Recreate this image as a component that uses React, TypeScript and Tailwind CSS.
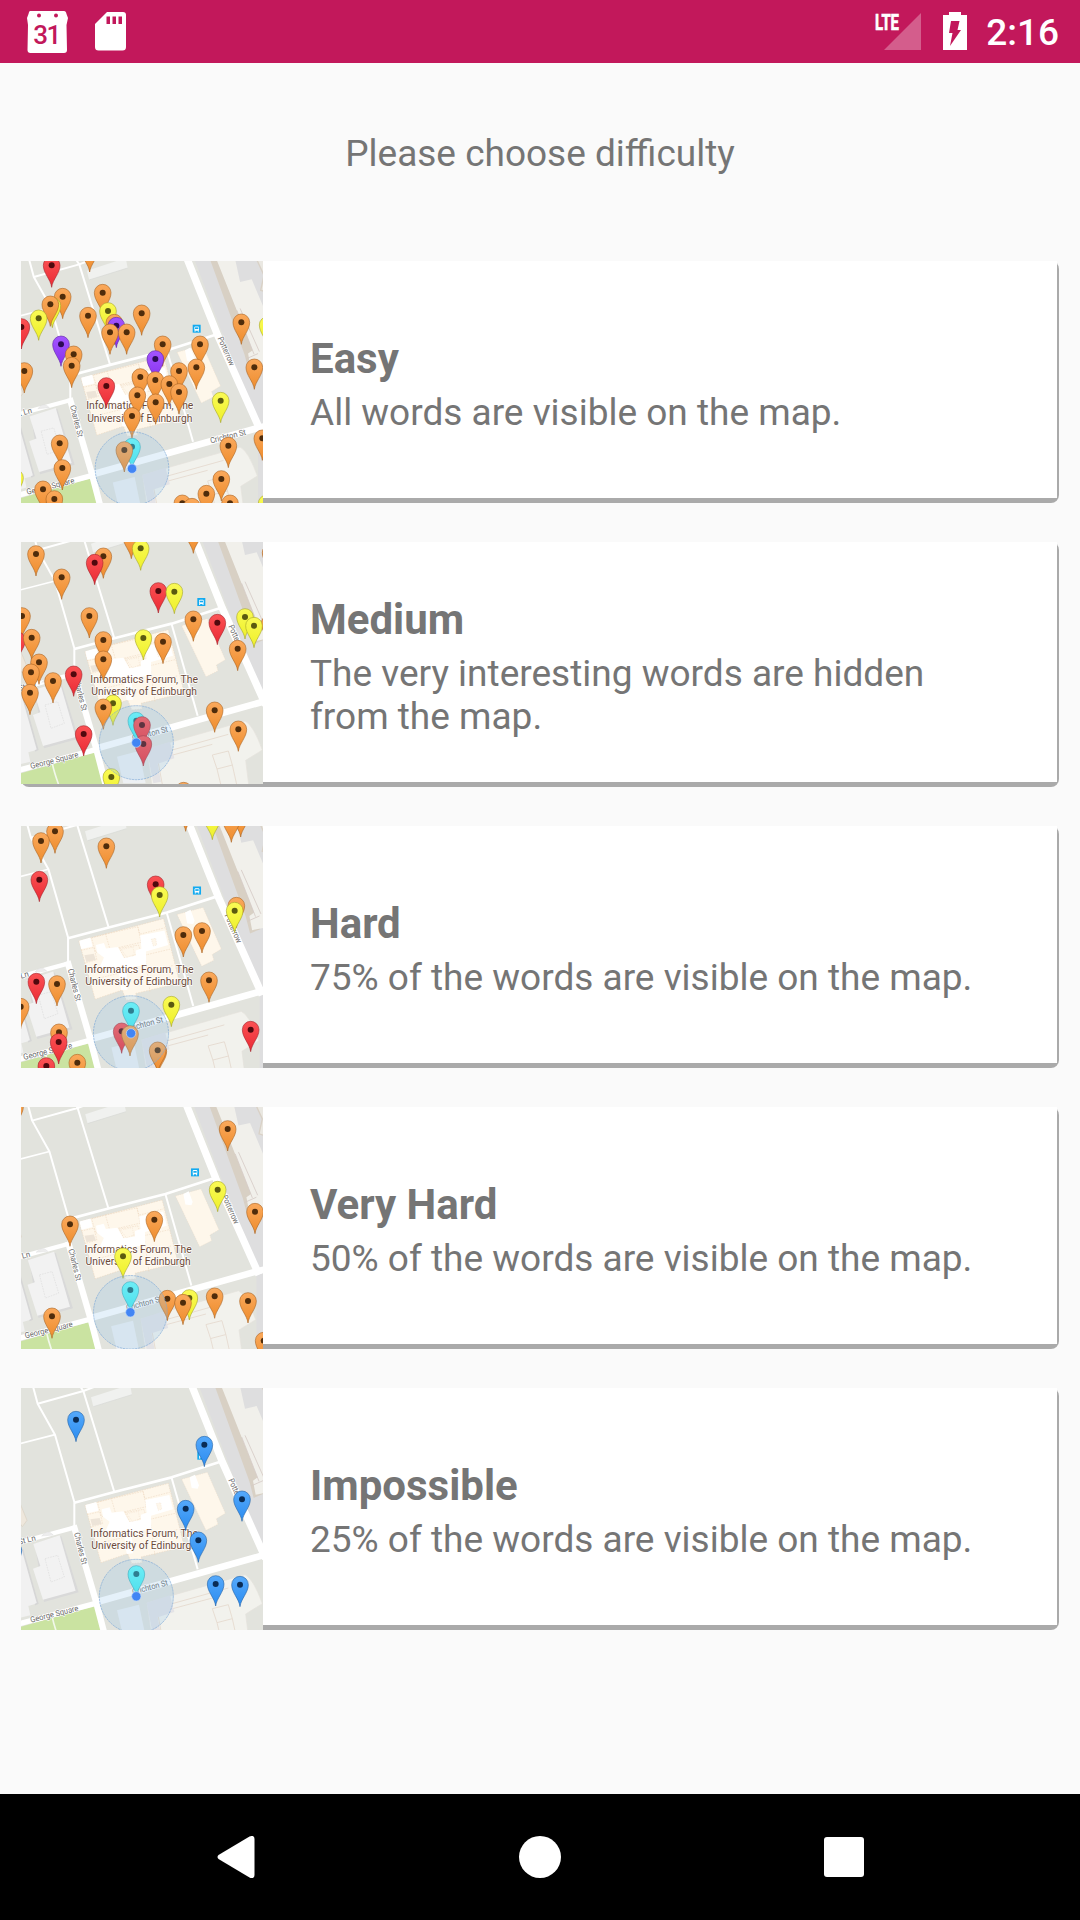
import React from "react";

type Kind = "o" | "r" | "y" | "p" | "c" | "b";
type Marker = [Kind, number, number];

interface MapData {
  top: number;
  cx: number;
  cy: number;
  scale: number;
  potterrow?: string;
  crichton?: string;
  markers: Marker[];
}

const PIN: Record<Kind, { from: string; to: string; edge: string; dot: string }> = {
  o: { from: "#faa95c", to: "#ee8c2c", edge: "#a96322", dot: "#4f2c0b" },
  r: { from: "#fb5254", to: "#ea2a34", edge: "#a3222a", dot: "#50090e" },
  y: { from: "#fafa55", to: "#eef02a", edge: "#a5a52a", dot: "#5b5a10" },
  p: { from: "#a355ff", to: "#8730ee", edge: "#5c24a3", dot: "#2b0b55" },
  c: { from: "#62fafb", to: "#3ae8ec", edge: "#2ba4b0", dot: "#126a75" },
  b: { from: "#55a9fb", to: "#2b8cf0", edge: "#2362a5", dot: "#0a2c55" },
};

const EASY: MapData = {
  top: 18, cx: 351, cy: 641, scale: 0.995,
  potterrow: "translate(622 250) rotate(66)",
  crichton: "translate(602 567) rotate(-14)",
  markers: [
    ["o", 224, -15], ["r", 110, 31], ["o", 143, 125], ["y", 112, 152], ["o", 106, 148], ["y", 71, 190],
    ["o", 263, 113], ["y", 279, 168], ["o", 219, 182], ["o", 380, 175], ["o", 298, 203], ["p", 304, 212],
    ["o", 285, 232], ["o", 335, 232], ["r", 19, 216], ["p", 138, 268], ["o", 176, 298], ["o", 170, 332],
    ["o", 28, 348], ["o", 443, 268], ["o", 555, 268], ["p", 421, 312], ["o", 544, 337], ["o", 492, 348],
    ["o", 376, 366], ["o", 421, 375], ["o", 463, 387], ["r", 274, 393], ["o", 492, 411], ["o", 367, 421],
    ["o", 422, 442], ["o", 351, 483], ["o", 679, 202], ["y", 758, 210], ["o", 718, 337], ["y", 617, 437],
    ["o", 134, 565], ["o", 142, 639], ["y", 0, 668], ["o", 84, 703], ["o", 118, 732], ["c", 351, 575],
    ["o", 328, 585], ["o", 742, 550], ["o", 640, 572], ["o", 619, 672], ["o", 574, 716], ["o", 502, 745],
    ["o", 531, 755], ["o", 645, 745], ["y", 755, 745],
  ],
};

const MEDIUM: MapData = {
  top: 18, cx: 364, cy: 620, scale: 1,
  markers: [
    ["o", 63, 54], ["o", 265, 61], ["r", 239, 80], ["o", 349, 2], ["y", 377, 37], ["o", 535, -14],
    ["o", 140, 124], ["r", 430, 165], ["y", 478, 167], ["o", 21, 240], ["o", 223, 240], ["o", 535, 250],
    ["r", 607, 260], ["y", 690, 243], ["o", 764, 262], ["y", 717, 269], ["r", 6, 312], ["o", 50, 305],
    ["o", 265, 312], ["y", 385, 306], ["o", 444, 317], ["o", 668, 338], ["o", 265, 370], ["o", 72, 379],
    ["o", 48, 409], ["r", 176, 415], ["o", 114, 435], ["o", 45, 470], ["y", 294, 502], ["o", 265, 514],
    ["o", 599, 523], ["c", 364, 554], ["r", 381, 567], ["o", 670, 580], ["r", 206, 594], ["r", 385, 624],
    ["y", 289, 723], ["o", 506, 764], ["o", 767, 50],
  ],
};

const HARD: MapData = {
  top: 18, cx: 348, cy: 640, scale: 1.015,
  markers: [
    ["o", 120, 34], ["o", 78, 63], ["o", 274, 79], ["r", 73, 179], ["o", 512, -32], ["y", 592, -7],
    ["o", 677, -15], ["o", 649, 1], ["r", 422, 193], ["y", 434, 225], ["o", 664, 257], ["y", 659, 272],
    ["o", 561, 333], ["o", 505, 345], ["o", 582, 481], ["r", 64, 485], ["o", 126, 492], ["y", 469, 554],
    ["o", 17, 560], ["c", 348, 572], ["r", 707, 629], ["r", 320, 634], ["o", 345, 642], ["o", 132, 637],
    ["r", 131, 666], ["o", 430, 694], ["o", 428, 691], ["o", 187, 728], ["r", 94, 738],
  ],
};

const VERY_HARD: MapData = {
  top: 21, cx: 346, cy: 637, scale: 0.995,
  markers: [
    ["o", 0, 20], ["o", 638, 87], ["y", 608, 269], ["o", 720, 335], ["o", 418, 359], ["o", 165, 373],
    ["y", 324, 469], ["c", 346, 570], ["o", 599, 589], ["o", 457, 596], ["y", 523, 594], ["o", 699, 603],
    ["o", 504, 608], ["o", 111, 649], ["o", 746, 722],
  ],
};

const IMPOSSIBLE: MapData = {
  top: 18, cx: 364, cy: 643, scale: 1,
  markers: [
    ["b", 183, 113], ["b", 568, 188], ["b", 681, 352], ["b", 512, 380], ["b", 550, 475], ["c", 364, 576],
    ["b", 602, 606], ["b", 675, 608], ["b", -5, 505],
  ],
};

function Gradients() {
  return (
    <svg className="absolute size-0" aria-hidden="true">
      <defs>
        {(Object.keys(PIN) as Kind[]).map((k) => (
          <linearGradient key={k} id={`pin-${k}`} x1="0" y1="0" x2="0" y2="1">
            <stop offset="0" stopColor={PIN[k].from} />
            <stop offset="1" stopColor={PIN[k].to} />
          </linearGradient>
        ))}
      </defs>
    </svg>
  );
}

function Streets() {
  return (
    <g>
      <rect x="-40" y="-40" width="880" height="880" fill="#e2e3dd" />
      {/* east side of Potterrow */}
      <path d="M540 -20 L800 -20 V800 H744 V520 Z" fill="#dededf" />
      <path d="M584 -30 L610 -20 L746 335 L716 348 L703 298 Z" fill="#d8d0c4" />
      <path d="M606 -20 L668 -20 L690 80 L725 72 L800 250 V322 L722 338 L714 296 L728 286 Z" fill="#f1f0eb" />
      <path d="M725 -20 H800 V120 L752 105 L762 60 Z" fill="#eae8e2" stroke="#d9d1c6" strokeWidth="4" />
      <path d="M680 165 L732 298 M690 160 L748 290 M708 312 L744 296" fill="none" stroke="#d6cbc6" strokeWidth="2.5" />
      {/* south-east block */}
      <path d="M395 662 L690 578 Q715 590 742 665 L692 696 L705 800 H415 Z" fill="#f2f2ed" stroke="#e5e2dc" strokeWidth="2" />
      <path d="M425 678 L640 618 M425 678 L448 800 M436 690 L592 648 M592 680 L640 668 L652 710 L606 722 Z M606 722 L625 800 M652 710 L672 800" fill="none" stroke="#e4d8cd" strokeWidth="2.5" />
      <path d="M395 662 L465 640 L478 690 L428 706 L438 760 L415 765 Z" fill="#e4e3e6" />
      <path d="M306 685 L372 668 L392 765 H325 Z" fill="#edf0f3" />
      {/* west block */}
      <path d="M55 486 L134 460 L186 628 L82 657 Z" fill="#d9d9d9" transform="translate(5 3)" />
      <path d="M55 486 L134 460 L182 626 L84 653 L54 560 L76 552 Z" fill="#f2f2f2" />
      <path d="M90 530 L128 520 L148 585 L108 600 Z" fill="none" stroke="#dcdcdc" strokeWidth="2" strokeDasharray="5 3" />
      <path d="M-20 510 L22 500 L68 664 L40 672 L46 700 L-20 716 Z" fill="#f1f1f1" />
      <path d="M22 500 L68 664 L60 668" fill="none" stroke="#d6d6d6" strokeWidth="5" />
      <path d="M16 366 L36 415 L22 434 L12 420 Z" fill="#eee7dc" stroke="#d9d0c2" strokeWidth="2" />
      {/* garden */}
      <path d="M-30 748 L240 672 L270 800 H-30 Z" fill="#cae3a1" />
      <path d="M112 706 Q118 735 135 780" fill="none" stroke="#f2f8ea" strokeWidth="5" />
      {/* north building */}
      <path d="M228 46 L345 8 L351 38 L235 74 Z" fill="#f0f1ef" />
      <path d="M235 74 L351 38" stroke="#d6d8d4" strokeWidth="2" />
      {/* paths and roads */}
      <g fill="none" stroke="#ffffff" strokeLinejoin="round">
        <path d="M45 -20 L68 65 L120 158 L178 360 L178 435" strokeWidth="6" />
        <path d="M68 65 L205 27 L290 -5" strokeWidth="6" />
        <path d="M192 8 L205 27 L298 330" strokeWidth="6" />
        <path d="M-20 194 L120 158" strokeWidth="5" />
        <path d="M178 362 L298 330 L470 286 L616 239" strokeWidth="8" />
        <path d="M470 288 L548 562" strokeWidth="6" />
        <path d="M-20 490 L180 436" strokeWidth="13" />
        <path d="M176 430 L242 655 L280 800" strokeWidth="19" />
        <path d="M-20 734 L242 664" strokeWidth="16" />
        <path d="M238 662 L744 520 L800 506" strokeWidth="20" />
        <path d="M518 -20 L622 240 L752 530" strokeWidth="22" />
      </g>
      <path d="M80 462 Q98 440 115 459 Z" fill="#ededed" stroke="#d8d8d8" />
      {/* forum */}
      <g stroke="#ecd6bd" strokeWidth="1.6" strokeDasharray="5 3">
        <path d="M210 370 L460 304 L508 494 L378 525 L382 542 L350 545 L338 515 L258 542 Z" fill="#fef7eb" />
        <path d="M247 361 L289 350 L302 395 L260 404 Z M289 350 L384 328 L394 374 L300 396 M384 328 L390 350 L464 331 M216 398 L254 389 L263 425 L226 436 M405 412 L480 394 M420 460 L490 442 M405 412 L420 520 M248 485 L330 465 M330 392 L386 382 L395 405 L370 412 L365 420 L345 420 Z M284 500 L350 485" fill="none" />
      </g>
      <g fill="#ffffff">
        <path d="M211 369 L244 360 L250 386 L217 394 Z" />
        <path d="M260 382 L284 376 L290 392 L325 388 L343 420 L378 414 L378 398 L395 392 L391 354 L463 339 L474 382 L408 401 L409 440 L350 450 L354 514 L335 516 L328 462 L270 450 L284 419 L264 404 Z" />
      </g>
      <g fill="#fef7eb" stroke="#ecd6bd" strokeDasharray="4 3">
        <path d="M424 365 L437 362 L440 382 L430 385 Z M335 395 L370 388 L374 410 L352 418 Z" />
        <path d="M500 292 L577 271 L631 394 L604 410 L609 427 L573 445 L562 422 Z" />
      </g>
      <path d="M524 286 L540 278 L552 310 L548 320 L530 318 Z" fill="#ffffff" />
      <path d="M226 412 L254 408 L260 426 L232 432 Z" fill="#ede4d8" />
      {/* bus stop */}
      <g transform="translate(559 221)">
        <rect x="-12" y="-12" width="24" height="24" fill="#12aaf0" />
        <rect x="-7" y="-7" width="14" height="13" rx="3" fill="#fff" />
        <rect x="-5" y="-4" width="10" height="5" fill="#12aaf0" />
        <path d="M-5 5 V9 M5 5 V9" stroke="#fff" strokeWidth="3" />
      </g>
    </g>
  );
}

function Labels({ map }: { map: MapData }) {
  return (
    <g fontFamily="Roboto, sans-serif" stroke="#ffffff" strokeLinejoin="round" paintOrder="stroke">
      <g fontSize="25" fill="#6b6b6b" strokeWidth="4">
        <text transform="translate(177 454) rotate(76)" textLength="98" lengthAdjust="spacingAndGlyphs">Charles St</text>
        <text transform={map.potterrow ?? "translate(640 294) rotate(66)"} textLength="92" lengthAdjust="spacingAndGlyphs">Potterrow</text>
        <text transform={map.crichton ?? "translate(354 638) rotate(-15)"} textLength="110" lengthAdjust="spacingAndGlyphs">Crichton St</text>
        <text transform="translate(48 722) rotate(-14)" textLength="148" lengthAdjust="spacingAndGlyphs">George Square</text>
        <text transform="translate(12 488) rotate(-14)" textLength="53" lengthAdjust="spacingAndGlyphs">St Ln</text>
      </g>
      <g fontSize="34" fill="#6b4a39" strokeWidth="4">
        <text x="226" y="464" textLength="323" lengthAdjust="spacingAndGlyphs">Informatics Forum, The</text>
        <text x="229" y="501" textLength="317" lengthAdjust="spacingAndGlyphs">University of Edinburgh</text>
      </g>
    </g>
  );
}

function MapThumb({ map }: { map: MapData }) {
  const r = 111 * map.scale;
  return (
    <svg className="block size-[242px] shrink-0" viewBox={`18 ${map.top} 726 726`}>
      <g transform={`translate(${map.cx} ${map.cy}) scale(${map.scale}) translate(-364 -643)`}>
        <Streets />
        <Labels map={map} />
      </g>
      {map.markers.map(([kind, x, y], i) => (
        <g key={i} transform={`translate(${x} ${y})`}>
          <path
            d="M0 66 C-3 42 -25 24 -25 0 A25 25 0 0 1 25 0 C25 24 3 42 0 66 Z"
            fill={`url(#pin-${kind})`}
            stroke={PIN[kind].edge}
            strokeWidth="1.8"
          />
          <circle r="9" fill={PIN[kind].dot} />
        </g>
      ))}
      <circle cx={map.cx} cy={map.cy} r={r} fill="#8fc4ea" fillOpacity="0.23" stroke="#7aa7d8" strokeWidth="2" strokeDasharray="7 2" />
      <circle cx={map.cx} cy={map.cy} r="14" fill="#4285f4" stroke="#c5dcfb" strokeWidth="2" />
    </svg>
  );
}

function Card({ title, text, map, tall }: { title: string; text: string; map: MapData; tall?: boolean }) {
  return (
    <section className={`flex rounded-[8px] rounded-tl-none bg-[#aaaaaa] ${tall ? "h-[245px] pb-[3px]" : "h-[242px] rounded-bl-none"}`}>
      <MapThumb map={map} />
      <div className={`mr-[2px] flex flex-1 flex-col justify-center bg-white pt-[9px] pl-[47px] ${tall ? "mb-[2px]" : "mb-[5px]"}`}>
        <h2 className="text-[42px] leading-[49px] font-bold">{title}</h2>
        <p className="mt-[8px] w-[680px] text-[37px] leading-[43px]">{text}</p>
      </div>
    </section>
  );
}

function StatusBar() {
  return (
    <header className="flex h-[63px] shrink-0 items-start bg-[#c2185b] text-white">
      <svg className="mt-[11px] ml-[27px] h-[42px] w-[41px]" viewBox="0 0 41 42">
        <path d="M3 0 H37 Q39 0 39.500 3 L41 7 L39.500 14 L40 39 Q40 42 37 42 H3.500 Q.500 42 .500 39 L1 14 L0 7 L1.500 3 Q2 0 3 0Z" fill="#fff" />
        <circle cx="12" cy="4.500" r="2" fill="#c2185b" />
        <circle cx="29" cy="4.500" r="2" fill="#c2185b" />
        <text x="19.500" y="33" textAnchor="middle" fontFamily="Roboto, sans-serif" fontWeight="500" fontSize="26" letterSpacing="-1.500" fill="#c2185b">31</text>
      </svg>
      <svg className="mt-[12px] ml-[27px] h-[39px] w-[31px]" viewBox="0 0 31 39">
        <path d="M12 0 H28 Q31 0 31 3 V35 Q31 38.500 27.500 38.500 H3.500 Q0 38.500 0 35 V12 Z" fill="#fff" />
        <path d="M11.500 4.500 h3.500 v7.500 h-3.500z M17.500 4.500 h3.500 v7.500 h-3.500z M23.500 4.500 h3.500 v7.500 h-3.500z" fill="#c2185b" />
      </svg>
      <svg className="mt-[13px] ml-auto h-[37px] w-[46px] overflow-visible" viewBox="0 0 46 37">
        <path d="M46 0 V37 H9 Z" fill="#fff" fillOpacity="0.3" />
        <text x="0" y="17" fontFamily="Roboto, sans-serif" fontWeight="700" fontSize="22.500" textLength="24" lengthAdjust="spacingAndGlyphs" fill="#fff" stroke="#fff" strokeWidth="0.7">LTE</text>
      </svg>
      <svg className="mt-[12px] ml-[22px] h-[38px] w-[24px]" viewBox="0 0 24 38">
        <path d="M6 0 H18 V3 H24 V38 H0 V3 H6 Z" fill="#fff" />
        <path d="M8 9 H16.500 L14.500 18 H18 L7 34 L9.500 21 H6 Z" fill="#c2185b" />
      </svg>
      <span className="mt-[11px] mr-[21px] ml-[19px] text-[37px] leading-[44px] font-medium">2:16</span>
    </header>
  );
}

function NavBar() {
  return (
    <nav className="flex h-[126px] shrink-0 items-center bg-black pl-[217px]">
      <svg className="h-[42px] w-[38px]" viewBox="0 0 38 42">
        <path d="M32.500 .600 Q37.500 -1.500 37.500 3 V39 Q37.500 43.500 32.500 41.400 L1.500 23 Q-.500 21 1.500 19 Z" fill="#fff" />
      </svg>
      <div className="ml-[264px] size-[42px] rounded-full bg-white" />
      <div className="ml-[263px] size-[40px] rounded-[3px] bg-white" />
    </nav>
  );
}

export default function App() {
  return (
    <div className="flex h-[1920px] w-[1080px] flex-col overflow-hidden bg-[#fafafa] font-['Roboto',sans-serif] text-[#757575]">
      <Gradients />
      <StatusBar />
      <main className="flex flex-1 flex-col px-[21px]">
        <h1 className="mt-[69px] mb-[86px] text-center text-[37px] leading-[43px]">Please choose difficulty</h1>
        <div className="flex flex-col gap-[39px]">
          <Card title="Easy" text="All words are visible on the map." map={EASY} />
          <Card title="Medium" text="The very interesting words are hidden from the map." map={MEDIUM} tall />
          <Card title="Hard" text="75% of the words are visible on the map." map={HARD} />
          <Card title="Very Hard" text="50% of the words are visible on the map." map={VERY_HARD} />
          <Card title="Impossible" text="25% of the words are visible on the map." map={IMPOSSIBLE} />
        </div>
      </main>
      <NavBar />
    </div>
  );
}
